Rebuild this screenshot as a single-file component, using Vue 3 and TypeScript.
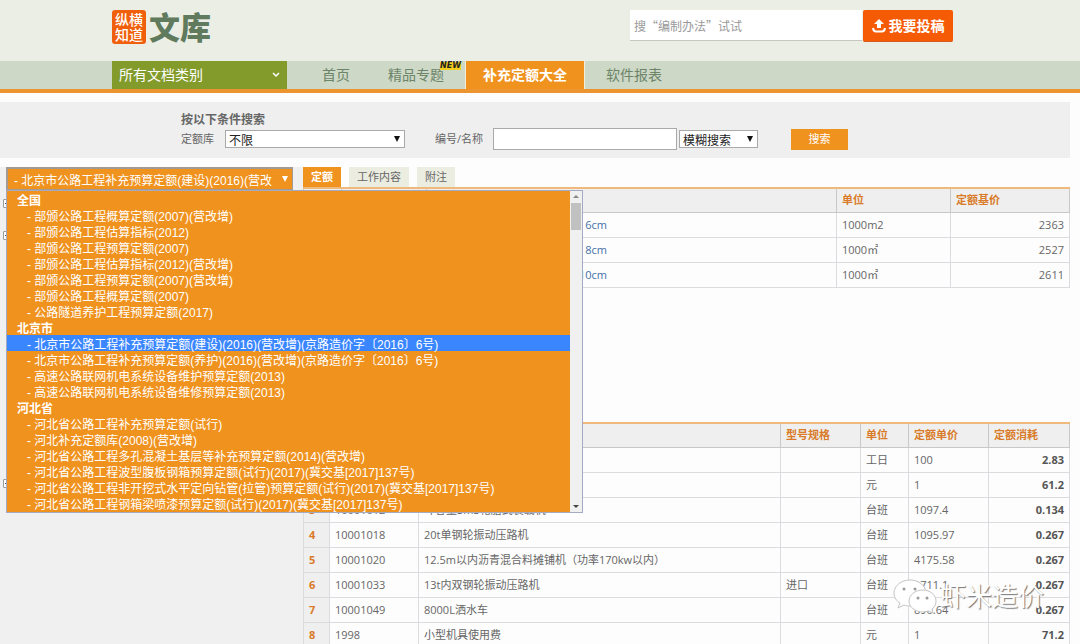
<script setup lang="ts">
import { ref } from 'vue'

interface Group { name: string; items: string[] }
interface Quota { name: string; unit: string; price: string }
interface Resource { code: string; name: string; spec: string; unit: string; price: string; amount: string }

const current = '北京市公路工程补充预算定额(建设)(2016)(营改增)(京路造价字〔2016〕6号)'
const library = ref(current)
const keyword = ref('')
const code = ref('')

const groups: Group[] = [
  {
    name: '全国',
    items: [
      '部颁公路工程概算定额(2007)(营改增)',
      '部颁公路工程估算指标(2012)',
      '部颁公路工程预算定额(2007)',
      '部颁公路工程估算指标(2012)(营改增)',
      '部颁公路工程预算定额(2007)(营改增)',
      '部颁公路工程概算定额(2007)',
      '公路隧道养护工程预算定额(2017)',
    ],
  },
  {
    name: '北京市',
    items: [
      current,
      '北京市公路工程补充预算定额(养护)(2016)(营改增)(京路造价字〔2016〕6号)',
      '高速公路联网机电系统设备维护预算定额(2013)',
      '高速公路联网机电系统设备维修预算定额(2013)',
    ],
  },
  {
    name: '河北省',
    items: [
      '河北省公路工程补充预算定额(试行)',
      '河北补充定额库(2008)(营改增)',
      '河北省公路工程多孔混凝土基层等补充预算定额(2014)(营改增)',
      '河北省公路工程波型腹板钢箱预算定额(试行)(2017)(冀交基[2017]137号)',
      '河北省公路工程非开挖式水平定向钻管(拉管)预算定额(试行)(2017)(冀交基[2017]137号)',
      '河北省公路工程钢箱梁喷漆预算定额(试行)(2017)(冀交基[2017]137号)',
    ],
  },
]

const quotas: Quota[] = [
  { name: '6cm', unit: '1000m2', price: '2363' },
  { name: '8cm', unit: '1000㎡', price: '2527' },
  { name: '10cm', unit: '1000㎡', price: '2611' },
]

const resources: Resource[] = [
  { code: '', name: '', spec: '', unit: '工日', price: '100', amount: '2.83' },
  { code: '', name: '', spec: '', unit: '元', price: '1', amount: '61.2' },
  { code: '10001012', name: '斗容量3m3轮胎式装载机', spec: '', unit: '台班', price: '1097.4', amount: '0.134' },
  { code: '10001018', name: '20t单钢轮振动压路机', spec: '', unit: '台班', price: '1095.97', amount: '0.267' },
  { code: '10001020', name: '12.5m以内沥青混合料摊铺机（功率170kw以内）', spec: '', unit: '台班', price: '4175.58', amount: '0.267' },
  { code: '10001033', name: '13t内双钢轮振动压路机', spec: '进口', unit: '台班', price: '1711.1', amount: '0.267' },
  { code: '10001049', name: '8000L洒水车', spec: '', unit: '台班', price: '890.64', amount: '0.267' },
  { code: '1998', name: '小型机具使用费', spec: '', unit: '元', price: '1', amount: '71.2' },
]
</script>

<template>
  <div class="page">
    <header class="top">
      <div class="wrap top-row">
        <a href="#" class="logo">
          <span class="seal"><span>纵横</span><span>知道</span></span>
          <span class="logo-name">文库</span>
        </a>
        <form class="site-search" @submit.prevent>
          <input v-model="keyword" type="text" aria-label="搜索文档" placeholder="搜“编制办法”试试">
          <button type="button" class="upload">
            <svg viewBox="0 0 14 14" width="14" height="14" aria-hidden="true">
              <path d="M7 0 L12 5 H9 V9 H5 V5 H2 Z" fill="#fff" />
              <path d="M1 9 Q1.500 12.500 4 12.500 H10 Q12.500 12.500 13 9" fill="none" stroke="#fff" stroke-width="2" />
            </svg>
            我要投稿
          </button>
        </form>
      </div>
    </header>

    <nav class="nav">
      <div class="wrap nav-row">
        <button type="button" class="category">
          所有文档类别
          <svg viewBox="0 0 8 6" width="8" height="6" aria-hidden="true">
            <path d="M1 1 L4 4 L7 1" fill="none" stroke="#fff" stroke-width="1.500" />
          </svg>
        </button>
        <a href="#" class="nav-link">首页</a>
        <a href="#" class="nav-link">精品专题<span class="new">NEW</span></a>
        <a href="#" class="nav-link active">补充定额大全</a>
        <a href="#" class="nav-link">软件报表</a>
      </div>
    </nav>

    <form class="filter" @submit.prevent>
      <h2>按以下条件搜索</h2>
      <div class="filter-row">
        <label for="lib">定额库</label>
        <span class="pick lib">
          <select id="lib"><option>不限</option></select>
        </span>
        <label for="code">编号/名称</label>
        <input id="code" v-model="code" type="text">
        <span class="pick mode">
          <select aria-label="搜索方式"><option>模糊搜索</option></select>
        </span>
        <button type="submit" class="go">搜索</button>
      </div>
    </form>

    <main class="body">
      <aside class="side">
        <div class="chooser">
          <span class="pick current">
            <select v-model="library" aria-label="当前定额库">
              <option :value="current">- {{ current }}</option>
            </select>
          </span>
          <div class="popup">
            <select v-model="library" size="20" aria-label="选择定额库">
              <optgroup v-for="g in groups" :key="g.name" :label="g.name">
                <option v-for="item in g.items" :key="item" :value="item">- {{ item }}</option>
              </optgroup>
            </select>
            <div class="bar" aria-hidden="true">
              <span class="arrow up"></span>
              <span class="thumb"></span>
              <span class="arrow down"></span>
            </div>
          </div>
        </div>
        <div class="tree">
          <button type="button" class="node" aria-label="折叠"></button>
          <button type="button" class="node" aria-label="折叠"></button>
          <button type="button" class="node last" aria-label="折叠"></button>
        </div>
      </aside>

      <section class="content">
        <div class="tabs">
          <button type="button" class="tab on">定额</button>
          <button type="button" class="tab">工作内容</button>
          <button type="button" class="tab">附注</button>
        </div>
        <div class="results">
          <table>
            <colgroup><col class="w38"><col class="w85"><col><col class="w114"><col class="w119"></colgroup>
            <thead>
              <tr><th></th><th></th><th></th><th>单位</th><th>定额基价</th></tr>
            </thead>
            <tbody>
              <tr v-for="(q, i) in quotas" :key="q.name">
                <th>{{ i + 1 }}</th>
                <td></td>
                <td><a href="#" class="quota">{{ q.name }}</a></td>
                <td>{{ q.unit }}</td>
                <td class="num">{{ q.price }}</td>
              </tr>
            </tbody>
          </table>
        </div>
        <table>
          <colgroup><col class="w26"><col class="w89"><col><col class="w80"><col class="w48"><col class="w80"><col class="w81"></colgroup>
          <thead>
            <tr><th></th><th></th><th></th><th>型号规格</th><th>单位</th><th>定额单价</th><th>定额消耗</th></tr>
          </thead>
          <tbody>
            <tr v-for="(r, i) in resources" :key="i">
              <th>{{ i + 1 }}</th>
              <td>{{ r.code }}</td>
              <td>{{ r.name }}</td>
              <td>{{ r.spec }}</td>
              <td>{{ r.unit }}</td>
              <td>{{ r.price }}</td>
              <td class="num strong">{{ r.amount }}</td>
            </tr>
          </tbody>
        </table>
      </section>
    </main>

    <div class="mark">
      <svg viewBox="0 0 44 36" width="44" height="36" aria-hidden="true">
        <g fill="#fff" stroke="#c4c4c4" stroke-width="1">
          <path d="M17 2 C8 2 1 8 1 15 C1 20 4 23 7 25 L5 30 L11 27 C13 28 16 28 18 28 C26 28 33 22 33 15 C33 8 26 2 17 2 Z" />
          <path d="M30 12 C22 12 16 17 16 23 C16 29 22 34 30 34 C32 34 34 33 36 33 L40 35 L39 31 C42 29 43 26 43 23 C43 17 37 12 30 12 Z" />
        </g>
        <g fill="#999"><circle cx="11" cy="11" r="1.500" /><circle cx="22" cy="11" r="1.500" /><circle cx="25" cy="20" r="1.500" /><circle cx="34" cy="20" r="1.500" /></g>
      </svg>
      <span>虾米造价</span>
    </div>
  </div>
</template>

<style>
body {
  margin: 0;
  background: #fdfdfd;
}
</style>

<style scoped>
.page {
  position: relative;
  height: 100vh;
  overflow: hidden;
  font-family: "Open Sans", "Noto Sans CJK SC", sans-serif;
  font-size: 11px;
  line-height: 16px;
  color: #666;
}
*, *::before, *::after { box-sizing: border-box; }
button, input, select {
  font: inherit;
  color: inherit;
  margin: 0;
  padding: 0;
  border: 0;
  border-radius: 0;
  background: none;
  appearance: none;
}
a { color: inherit; text-decoration: none; }
.wrap {
  max-width: 856px;
  margin: 0 auto;
  padding-right: 15px;
}

.top { background: #eaeee4; }
.top-row {
  display: flex;
  justify-content: space-between;
  align-items: flex-start;
  padding-top: 10px;
  padding-bottom: 17px;
}
.logo { display: flex; align-items: center; gap: 3px; }
.seal {
  display: flex;
  flex-direction: column;
  justify-content: center;
  width: 34px;
  height: 34px;
  border-radius: 3px;
  background: #f0600c;
  color: #fff;
  font-size: 14px;
  font-weight: 500;
  line-height: 15px;
  text-align: center;
}
.logo-name {
  font-size: 31px;
  line-height: 32px;
  font-weight: 900;
  color: #5f7a5c;
}
.site-search { display: flex; gap: 1px; }
.site-search input {
  width: 232px;
  height: 31px;
  padding: 0 4px;
  background: #fff;
  border-bottom: 1px solid #c4c8c0;
  font-family: "Noto Sans CJK SC", sans-serif;
  font-size: 12px;
}
.site-search input::placeholder { color: #999; opacity: 1; }
.upload {
  display: flex;
  align-items: center;
  justify-content: center;
  gap: 3px;
  width: 90px;
  height: 32px;
  border-radius: 2px;
  background: #f55a05;
  border-bottom: 1px solid #d85a1c;
  color: #fff;
  font-size: 14px;
  font-weight: 700;
}

.nav { background: #cdd8c6; border-bottom: 4px solid #ec9430; }
.nav-row { display: flex; height: 28px; font-size: 14px; line-height: 28px; }
.category {
  display: flex;
  align-items: center;
  justify-content: space-between;
  width: 175px;
  margin-right: 16px;
  padding: 0 7px;
  background: #829b2b;
  color: #fff;
}
.nav-link { position: relative; padding: 0 19px; color: #6c8468; }
.nav-link.active {
  padding: 0 17px;
  margin: 0 2px;
  background: #f0921e;
  border: solid #f4efdc;
  border-width: 0 1px;
  color: #fff;
  font-weight: 700;
}
.new {
  position: absolute;
  top: 1px;
  right: 2px;
  background: #f2cf1c;
  color: #222;
  font-family: "DejaVu Sans", sans-serif;
  font-size: 8px;
  line-height: 8px;
  font-weight: 700;
  font-style: italic;
}

.filter {
  margin: 9px 10px 9px 0;
  padding: 10px 0 8px 181px;
  background: #efefef;
}
.filter h2 { margin: 0; font-size: 12px; line-height: 16px; }
.filter-row { display: flex; align-items: center; height: 22px; }
.filter-row label { white-space: nowrap; }
.pick { position: relative; display: block; }
.pick::after {
  content: "";
  position: absolute;
  right: 5px;
  top: 50%;
  margin-top: -3px;
  border: 3px solid transparent;
  border-top: 6px solid #111;
  border-bottom: 0;
  pointer-events: none;
}
.pick select {
  display: block;
  width: 100%;
  height: 18px;
  padding: 2px 3px 0;
  border: 1px solid #a9a9a9;
  background: #fff;
  color: #222;
  font-family: "Liberation Sans", "Noto Sans CJK SC", sans-serif;
  font-size: 12px;
  line-height: 16px;
}
.lib { width: 180px; margin: 0 30px 0 11px; }
.mode { width: 79px; margin: 0 33px 0 2px; }
.filter-row input {
  width: 184px;
  height: 22px;
  margin-left: 10px;
  padding: 0 3px;
  border: 1px solid #a9a9a9;
  background: #fff;
}
.go { width: 57px; height: 21px; background: #f0921e; color: #fff; }

.body { display: flex; margin-right: 10px; }
.side { flex: none; width: 303px; min-height: 480px; background: #f0f0f0; }
.chooser { position: relative; padding-left: 6px; }
.current { width: 287px; }
.pick.current select {
  height: 24px;
  padding: 4px 20px 0 6px;
  border: 2px solid #a29a94;
  border-right-width: 1px;
  background: #f0921e;
  color: #fff;
  overflow: hidden;
}
.pick.current::after { border-top-color: #fff; }
.popup {
  position: absolute;
  z-index: 2;
  top: 23px;
  left: 6px;
  display: flex;
  width: 577px;
  border: 1px solid #a4a9c4;
}
.popup select {
  flex: 1;
  height: 321px;
  overflow: hidden;
  background: #f0921e;
  color: #fff;
  font-family: "Liberation Sans", "Noto Sans CJK SC", sans-serif;
  font-size: 12px;
  outline: 0;
}
.popup optgroup { padding-left: 8px; font-weight: 700; }
.popup option {
  min-height: 16px;
  height: 16px;
  margin-left: -8px;
  padding: 0 0 0 20px;
  line-height: 16px;
  font-weight: 400;
  color: #fff;
}
.popup option:first-child { margin-top: -2px; }
.popup option:checked { background: #3a86ff linear-gradient(#3a86ff, #3a86ff); color: #fff; }
.bar {
  display: flex;
  flex-direction: column;
  align-items: center;
  width: 12px;
  padding: 4px 0;
  background: #f0f0f0;
}
.arrow { border: 3px solid transparent; }
.up { border-top: 0; border-bottom-color: #888; }
.down { margin-top: auto; border-bottom: 0; border-top-color: #444; }
.thumb { width: 10px; height: 27px; margin-top: 5px; background: #c1c1c1; }

.tree { display: flex; flex-direction: column; gap: 23px; padding: 8px 0 0 3px; }
.node {
  display: grid;
  place-items: center;
  width: 9px;
  height: 9px;
  border: 1px solid #999;
  border-radius: 1px;
  background: #fff;
}
.node::before { content: ""; width: 5px; height: 1px; background: #555; }
.last { margin-top: 216px; }

.content { flex: 1; min-width: 0; background: #fdfdfd; }
.tabs { display: flex; gap: 8px; }
.tab { padding: 0 8px; height: 20px; background: #ecede1; line-height: 20px; }
.tab.on { background: #f0921e; color: #fff; font-weight: 700; }
.results { min-height: 235px; }
table {
  width: 100%;
  table-layout: fixed;
  border-collapse: collapse;
  border-top: 2px solid #efb87c;
}
th, td {
  height: 25px;
  padding: 0 5px;
  border: 1px solid #dcdce0;
  text-align: left;
  white-space: nowrap;
  overflow: hidden;
}
thead th { height: 24px; border-color: #c8c8c8; border-top: 0; }
th { background: #efefef; color: #d97b29; font-weight: 700; }
.num { text-align: right; }
.strong { font-weight: 700; color: #555; }
.quota { display: inline-block; width: 175px; text-align: right; color: #4470a8; }
.w26 { width: 26px; }
.w38 { width: 38px; }
.w48 { width: 48px; }
.w80 { width: 80px; }
.w81 { width: 81px; }
.w85 { width: 85px; }
.w89 { width: 89px; }
.w114 { width: 114px; }
.w119 { width: 119px; }

.mark {
  position: absolute;
  right: 36px;
  bottom: 30px;
  display: flex;
  align-items: center;
  gap: 3px;
  color: #fff;
  font-size: 26px;
  line-height: 36px;
  text-shadow: 1px 1px 1px #777;
  pointer-events: none;
}
</style>
